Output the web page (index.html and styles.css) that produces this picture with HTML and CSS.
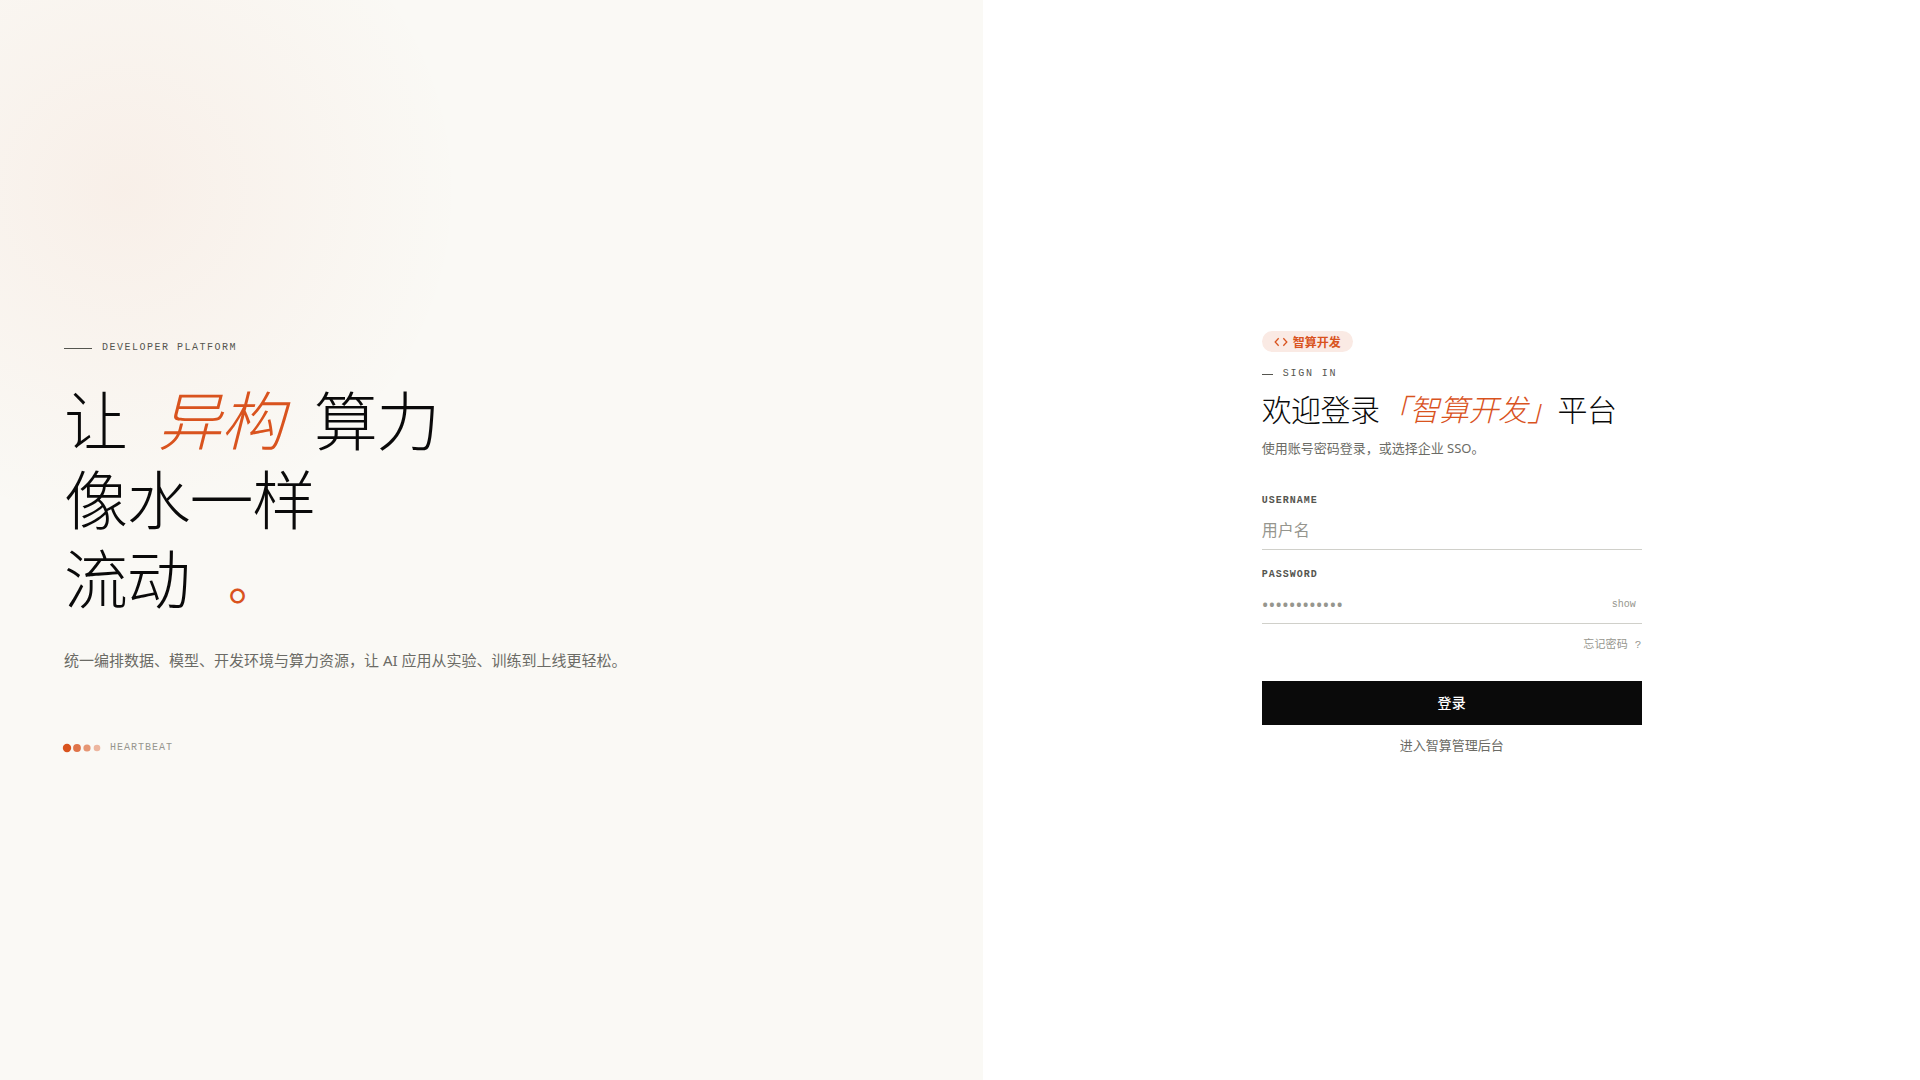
FILE: index.html
```html
<!DOCTYPE html>
<html lang="zh-CN">
<head>
    <meta charset="UTF-8">
    <meta name="viewport" content="width=device-width, initial-scale=1.0">
    <title>智算开发平台 - 登录</title>
    <link rel="stylesheet" href="styles.css">
</head>
<body>
    <div class="login-page">
        <section class="hero">
            <div class="hero-eyebrow">DEVELOPER PLATFORM</div>
            <h1 class="hero-title">让 <em>异构</em> 算力<br>像水一样<br>流动 <span class="stop">。</span></h1>
            <p class="hero-desc">统一编排数据、模型、开发环境与算力资源，让 AI 应用从实验、训练到上线更轻松。</p>
            <div class="heartbeat">
                <span class="dots">
                    <i class="dot dot-1"></i>
                    <i class="dot dot-2"></i>
                    <i class="dot dot-3"></i>
                    <i class="dot dot-4"></i>
                </span>
                <span>HEARTBEAT</span>
            </div>
        </section>

        <main class="panel">
            <form class="login-form" onsubmit="return false">
                <div class="badge">
                    <svg width="14" height="14" viewBox="0 0 24 24" fill="none" stroke="currentColor" stroke-width="2.2">
                        <path d="M8 5.5L2 12l6 6.5M16 5.5l6 6.5-6 6.5"/>
                    </svg>
                    <span>智算开发</span>
                </div>
                <div class="form-eyebrow">SIGN IN</div>
                <h2 class="form-title">欢迎登录 <em>「智算开发」</em> 平台</h2>
                <p class="form-sub">使用账号密码登录，或选择企业 SSO。</p>

                <div class="field">
                    <label for="username">USERNAME</label>
                    <div class="control">
                        <input type="text" id="username" placeholder="用户名">
                    </div>
                </div>
                <div class="field">
                    <label for="password">PASSWORD</label>
                    <div class="control">
                        <input type="password" id="password" placeholder="••••••••••••">
                        <button type="button" class="toggle" onclick="togglePassword(this)">show</button>
                    </div>
                </div>
                <a href="#" class="forgot">忘记密码 ?</a>
                <button type="submit" class="submit">登录</button>
                <a href="#" class="admin-link">进入智算管理后台</a>
            </form>
        </main>
    </div>
    <script>
        function togglePassword(btn) {
            var input = document.getElementById('password');
            var hidden = input.type === 'password';
            input.type = hidden ? 'text' : 'password';
            btn.textContent = hidden ? 'hide' : 'show';
        }
    </script>
</body>
</html>
```
FILE: styles.css
```css
* {
    box-sizing: border-box;
}

body {
    margin: 0;
    font-family: "Noto Sans", "Noto Sans CJK SC", sans-serif;
    color: #0a0a0a;
    background-color: #ffffff;
}

h1, h2, p {
    margin: 0;
}

.login-page {
    display: grid;
    grid-template-columns: 1.05fr 1fr;
    min-height: 100vh;
}

/* left side */
.hero {
    display: flex;
    flex-direction: column;
    justify-content: center;
    padding: 80px 64px 64px;
    background: radial-gradient(circle at 123px 191px, rgba(217, 83, 30, 0.06), rgba(217, 83, 30, 0) 340px) #faf9f5;
}

.hero-eyebrow,
.form-eyebrow {
    display: flex;
    align-items: center;
    gap: 10px;
    font-family: "Liberation Mono", monospace;
    font-size: 10px;
    line-height: 16px;
    letter-spacing: 0.15em;
    color: #55554f;
}

.hero-eyebrow::before,
.form-eyebrow::before {
    content: "";
    width: 28px;
    height: 1px;
    background-color: #55554f;
}

.hero-title {
    margin-top: 28px;
    font-family: "Liberation Serif", "Noto Sans CJK SC", serif;
    font-size: 64px;
    font-weight: 300;
    line-height: 79px;
    letter-spacing: -0.02em;
}

.hero-title em {
    margin: 0 16px;
    color: #d9531e;
}

.stop {
    margin-left: 24px;
    font-size: 48px;
    font-weight: 400;
    line-height: 1;
    vertical-align: 3px;
    color: #d9531e;
}

.hero-desc {
    margin-top: 26px;
    font-size: 15px;
    line-height: 26px;
    color: #6b6b65;
}

.heartbeat {
    display: flex;
    align-items: center;
    gap: 10px;
    margin-top: 67px;
    font-family: "Liberation Mono", monospace;
    font-size: 10px;
    line-height: 16px;
    letter-spacing: 0.1em;
    color: #96968e;
}

.dots {
    display: flex;
    gap: 4px;
}

.dot {
    width: 6px;
    height: 6px;
    border-radius: 50%;
    background-color: #d9531e;
}

.dot-1 {
    transform: scale(1.4);
}

.dot-2 {
    opacity: 0.8;
    transform: scale(1.3);
}

.dot-3 {
    opacity: 0.6;
    transform: scale(1.2);
}

.dot-4 {
    opacity: 0.4;
    transform: scale(1.1);
}

/* right side */
.panel {
    display: flex;
    align-items: center;
    justify-content: center;
    padding: 46px 40px 40px;
}

.login-form {
    display: flex;
    flex-direction: column;
    width: 100%;
    max-width: 380px;
}

.badge {
    display: flex;
    align-items: center;
    align-self: flex-start;
    gap: 5px;
    height: 21px;
    padding: 0 12px;
    border-radius: 11px;
    font-size: 12px;
    font-weight: 700;
    color: #d9531e;
    background-color: #faeae4;
}

.form-eyebrow {
    margin-top: 14px;
    letter-spacing: 0.18em;
}

.form-eyebrow::before {
    width: 11px;
}

.form-title {
    margin-top: 11px;
    font-family: "Liberation Serif", "Noto Sans CJK SC", serif;
    font-size: 30px;
    font-weight: 300;
    line-height: 36px;
    letter-spacing: -0.02em;
    white-space: nowrap;
}

/* pull in the blank half of the corner brackets */
.form-title em {
    margin: 0 -6px 0 -6px;
    color: #d9531e;
}

.form-sub {
    margin-top: 9px;
    margin-bottom: 18px;
    font-size: 13px;
    line-height: 20px;
    color: #6b6b65;
}

.field {
    margin-top: 16px;
}

.field label {
    display: block;
    font-family: "Liberation Mono", monospace;
    font-size: 10px;
    font-weight: 700;
    line-height: 18px;
    letter-spacing: 0.1em;
    color: #55554f;
}

.control {
    display: flex;
    align-items: center;
    border-bottom: 1px solid #d0d0ca;
}

.control input {
    flex: 1;
    height: 39px;
    padding: 0;
    border: none;
    outline: none;
    font-family: inherit;
    font-size: 16px;
    color: #0a0a0a;
    background: none;
}

.control input::placeholder {
    color: #96968e;
}

.control input[type="password"] {
    font-size: 18px;
}

.toggle {
    padding: 6px 6px 4px;
    border: none;
    font-family: "Liberation Mono", monospace;
    font-size: 10px;
    color: #96968e;
    background: none;
    cursor: pointer;
}

.forgot {
    align-self: flex-end;
    margin-top: 13px;
    font-family: "Liberation Mono", "Noto Sans CJK SC", monospace;
    font-size: 11px;
    line-height: 16px;
    letter-spacing: 0.02em;
    color: #96968e;
    text-decoration: none;
}

.submit {
    height: 44px;
    margin-top: 28px;
    padding: 0 0 2px;
    border: none;
    font-family: inherit;
    font-size: 14px;
    font-weight: 500;
    letter-spacing: 0.02em;
    color: #ffffff;
    background-color: #0a0a0a;
    cursor: pointer;
}

.admin-link {
    align-self: center;
    margin-top: 10px;
    font-size: 13px;
    line-height: 20px;
    color: #6b6b65;
    text-decoration: none;
}
```
